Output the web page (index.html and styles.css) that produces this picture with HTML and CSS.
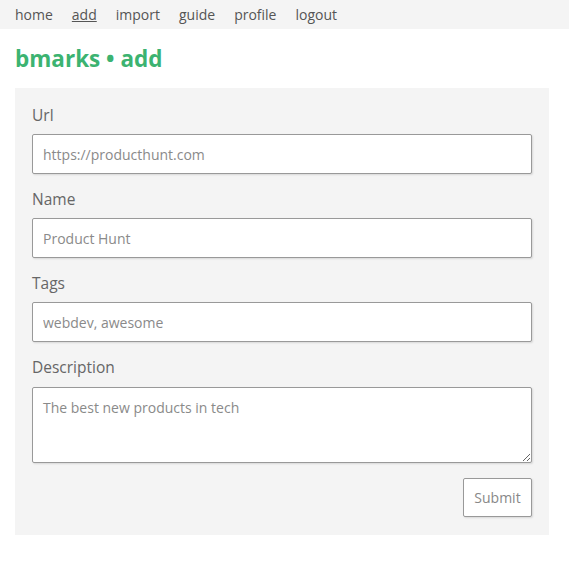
FILE: index.html
```html
<!DOCTYPE html>
<html>
<head>
<meta charset="utf-8">
<link rel="stylesheet" href="styles.css">
</head>
<body>
<nav class="nav">
  <a href="#">home</a>
  <a href="#" class="current">add</a>
  <a href="#">import</a>
  <a href="#">guide</a>
  <a href="#">profile</a>
  <a href="#">logout</a>
</nav>
<h1 class="title">bmarks • add</h1>
<form class="card">
  <label class="label">Url</label>
  <input class="field" type="text" placeholder="https://producthunt.com">
  <label class="label">Name</label>
  <input class="field" type="text" placeholder="Product Hunt">
  <label class="label">Tags</label>
  <input class="field" type="text" placeholder="webdev, awesome">
  <label class="label">Description</label>
  <textarea class="field area" placeholder="The best new products in tech"></textarea>
  <div class="actions"><button class="btn" type="button">Submit</button></div>
</form>
</body>
</html>
```
FILE: styles.css
```css
* { box-sizing: border-box; }
body {
  margin: 0;
  font-family: "Open Sans", "Liberation Sans", sans-serif;
  color: #666;
  background: #fff;
}
.nav {
  display: flex;
  gap: 19px;
  height: 29px;
  align-items: center;
  padding: 0 15px;
  background: #f4f4f4;
}
.nav a {
  color: #555;
  text-decoration: none;
  font-size: 14px;
}
.nav a.current { text-decoration: underline; }
.title {
  margin: 16px 15px 15px;
  height: 28px;
  line-height: 28px;
  font-size: 22.5px;
  font-weight: 700;
  color: #3cb371;
}
.card {
  margin: 0 15px;
  width: 534px;
  background: #f4f4f4;
  padding: 17px 17px 18px;
  display: flex;
  flex-direction: column;
}
.label {
  display: block;
  height: 20px;
  line-height: 20px;
  font-size: 15.5px;
  color: #666;
  margin-bottom: 9px;
}
.field {
  display: block;
  width: 100%;
  height: 40px;
  margin: 0 0 15px;
  padding: 0 10px;
  border: 1px solid #999;
  border-radius: 2px;
  background: #fff;
  box-shadow: 1px 1px 2px rgba(0,0,0,0.12);
  font-family: inherit;
  font-size: 14px;
  color: #777;
}
.field::placeholder { color: #8a8a8a; opacity: 1; }
.area {
  height: 76px;
  padding: 10px;
  margin-top: 1px;
  margin-bottom: 15px;
  resize: vertical;
}
.actions {
  display: flex;
  justify-content: flex-end;
}
.btn {
  width: 69px;
  height: 39px;
  border: 1px solid #999;
  border-radius: 2px;
  background: #fff;
  box-shadow: 1px 1px 2px rgba(0,0,0,0.12);
  font-family: inherit;
  font-size: 14px;
  color: #888;
}
```
